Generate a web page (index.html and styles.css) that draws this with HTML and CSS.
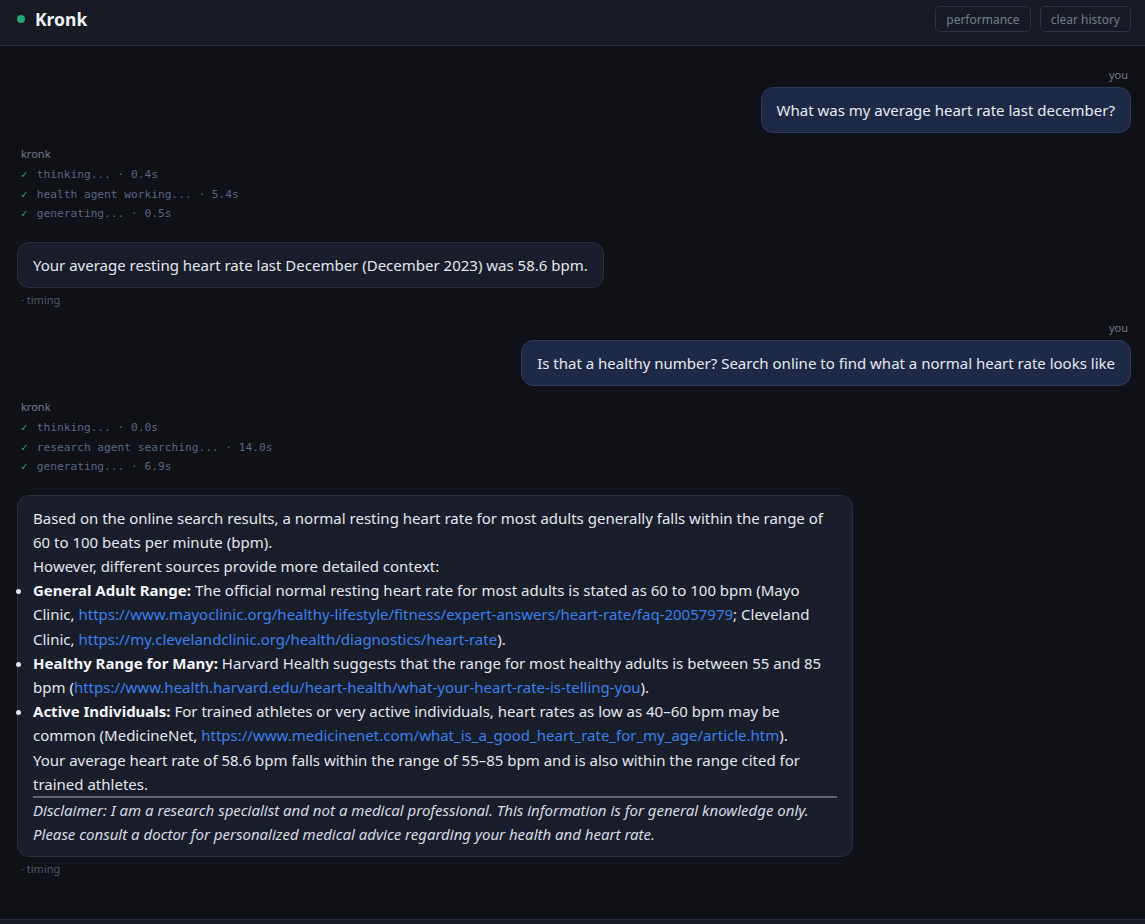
FILE: index.html
```html
<!DOCTYPE html>
<html>
<head>
    <meta charset='utf-8'>
    <title>Kronk</title>
    <meta name='viewport' content='width=device-width, initial-scale=1'>
    <link rel="stylesheet" href="styles.css">
</head>
<body>
    <header class="topbar">
        <div class="brand">
            <span class="dot"></span>
            <h1>Kronk</h1>
        </div>
        <div class="actions">
            <button>performance</button>
            <button>clear history</button>
        </div>
    </header>

    <main class="chat">
        <div class="msg user">
            <div class="who">you</div>
            <div class="bubble">What was my average heart rate last december?</div>
        </div>

        <div class="msg bot">
            <div class="who">kronk</div>
            <ul class="steps">
                <li><span class="tick">✓</span>thinking... · 0.4s</li>
                <li><span class="tick">✓</span>health agent working... · 5.4s</li>
                <li><span class="tick">✓</span>generating... · 0.5s</li>
            </ul>
            <div class="bubble">Your average resting heart rate last December (December 2023) was 58.6 bpm.</div>
            <div class="timing">· timing</div>
        </div>

        <div class="msg user">
            <div class="who">you</div>
            <div class="bubble">Is that a healthy number? Search online to find what a normal heart rate looks like</div>
        </div>

        <div class="msg bot">
            <div class="who">kronk</div>
            <ul class="steps">
                <li><span class="tick">✓</span>thinking... · 0.0s</li>
                <li><span class="tick">✓</span>research agent searching... · 14.0s</li>
                <li><span class="tick">✓</span>generating... · 6.9s</li>
            </ul>
            <div class="bubble">
                <p>Based on the online search results, a normal resting heart rate for most adults generally falls within the range of 60 to 100 beats per minute (bpm).</p>
                <p>However, different sources provide more detailed context:</p>
                <ul>
                    <li><strong>General Adult Range:</strong> The official normal resting heart rate for most adults is stated as 60 to 100 bpm (Mayo Clinic, <a href="#">https://www.mayoclinic.org/healthy-lifestyle/fitness/expert-answers/heart-rate/faq-20057979</a>; Cleveland Clinic, <a href="#">https://my.clevelandclinic.org/health/diagnostics/heart-rate</a>).</li>
                    <li><strong>Healthy Range for Many:</strong> Harvard Health suggests that the range for most healthy adults is between 55 and 85 bpm (<a href="#">https://www.health.harvard.edu/heart-health/what-your-heart-rate-is-telling-you</a>).</li>
                    <li><strong>Active Individuals:</strong> For trained athletes or very active individuals, heart rates as low as 40–60 bpm may be common (MedicineNet, <a href="#">https://www.medicinenet.com/what_is_a_good_heart_rate_for_my_age/article.htm</a>).</li>
                </ul>
                <p>Your average heart rate of 58.6 bpm falls within the range of 55–85 bpm and is also within the range cited for trained athletes.</p>
                <hr>
                <p><em>Disclaimer: I am a research specialist and not a medical professional. This information is for general knowledge only. Please consult a doctor for personalized medical advice regarding your health and heart rate.</em></p>
            </div>
            <div class="timing">· timing</div>
        </div>
    </main>

    <footer class="composer">
        <input type="text" placeholder="ask kronk something...">
    </footer>
</body>
</html>
```

FILE: styles.css
```css
body {
    margin: 0;
    font-family: "Noto Sans", "Open Sans", sans-serif;
    background-color: #0f1117;
    color: #e3e6ec;
    overflow: hidden;
}

/* top bar */
.topbar {
    height: 46px;
    box-sizing: border-box;
    display: flex;
    align-items: center;
    justify-content: space-between;
    padding: 0 14px 0 17px;
    background-color: #181b24;
    border-bottom: 1px solid #262c40;
}
.brand {
    display: flex;
    align-items: center;
    gap: 10px;
    margin-top: -7px;
}
.dot {
    width: 8px;
    height: 8px;
    border-radius: 50%;
    background-color: #23a877;
}
.brand h1 {
    margin: 0;
    font-size: 17.5px;
    font-weight: 700;
    color: #eef1f6;
}
.actions {
    display: flex;
    gap: 9px;
    margin-top: -7px;
}
.actions button {
    height: 26px;
    padding: 0 10px;
    font-family: inherit;
    font-size: 12px;
    color: #6f7a8d;
    background: transparent;
    border: 1px solid #2d3345;
    border-radius: 5px;
}

/* conversation */
.chat {
    min-height: calc(100vh - 51px);
    box-sizing: border-box;
    padding: 21px 14px 0 17px;
    display: flex;
    flex-direction: column;
    gap: 12px;
}
.msg {
    display: flex;
    flex-direction: column;
}
.msg.user {
    align-items: flex-end;
}
.msg.bot {
    align-items: flex-start;
    margin-top: 1px;
}
.who {
    font-size: 11px;
    line-height: 16px;
    color: #707a8c;
    padding: 0 3px 0 4px;
    margin-bottom: 4px;
}
.bot .who {
    margin-bottom: 3px;
}
.bubble {
    box-sizing: border-box;
    font-size: 15px;
    line-height: 24.2px;
    padding: 10px 15px;
    border-radius: 12px;
    max-width: 75%;
}
.user .bubble {
    background-color: #1e2a45;
    border: 1px solid #2b3a5c;
    color: #e6e9f0;
}
.bot .bubble {
    background-color: #1a1e2a;
    border: 1px solid #2a2f3e;
}
.bubble p {
    margin: 0;
}
.bubble ul {
    margin: 0;
    padding-left: 0;
}
.bubble strong {
    color: #f4f6fa;
}
.bubble a {
    color: #3b7ee8;
    text-decoration: none;
}
.bubble hr {
    margin: 0;
    border: 0;
    border-top: 2px solid #5d6370;
}
.bubble em {
    color: #d6dae2;
}

/* agent steps */
.steps {
    list-style: none;
    margin: 0 0 18px;
    padding: 0 0 0 4px;
    font-family: "DejaVu Sans Mono", monospace;
    font-size: 11.2px;
    line-height: 19.5px;
    color: #5a6680;
}
.tick {
    color: #22a06b;
    font-weight: 700;
    margin-right: 9px;
}
.timing {
    font-size: 11px;
    line-height: 16px;
    color: #4f596c;
    padding-left: 4px;
    margin-top: 4px;
}

/* input bar */
.composer {
    background-color: #181b24;
    border-top: 1px solid #262c40;
    padding: 14px 17px;
}
.composer input {
    width: 100%;
    height: 40px;
    box-sizing: border-box;
    background-color: #0f1117;
    border: 1px solid #2d3345;
    border-radius: 8px;
    color: #e3e6ec;
}
```
